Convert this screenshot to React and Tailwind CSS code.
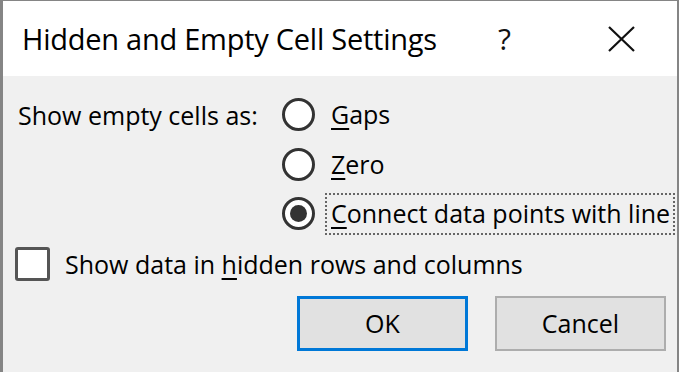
import { useState } from 'react';

const font = { fontFamily: '"Open Sans", "Noto Sans", Arial, sans-serif' };

function Radio({ checked, label, underline, rest, focused, onClick }) {
  return (
    <div className="flex items-center h-[33px]" onClick={onClick}>
      <div className="w-[33px] h-[33px] rounded-full border-[3px] border-[#333] bg-white flex items-center justify-center shrink-0">
        {checked && <div className="w-[17px] h-[17px] rounded-full bg-[#333]" />}
      </div>
      <div
        className={`ml-[10px] h-[42px] flex items-center pl-[4px] pr-[3px] border-2 ${
          focused ? 'border-dotted border-[#666]' : 'border-transparent'
        }`}
      >
        <span className="text-[25px] leading-none text-black">
          <span className="underline underline-offset-[4px] decoration-2">{underline}</span>
          {rest}
        </span>
      </div>
    </div>
  );
}

export default function App() {
  const [mode, setMode] = useState('connect');
  const [showHidden, setShowHidden] = useState(false);

  return (
    <div className="w-[681px] h-[372px] bg-white overflow-hidden" style={font}>
      <div className="w-[679px] h-[372px] flex flex-col border-l-[3px] border-t border-r-2 border-[#858585]">
        {/* title bar */}
        <div className="h-[75px] bg-white flex items-center shrink-0">
          <div className="pl-[19px] text-[29px] leading-none text-black tracking-[-0.25px]">
            Hidden and Empty Cell Settings
          </div>
          <div className="ml-auto w-[20px] text-[30px] leading-none text-[#111] font-medium">?</div>
          <svg className="ml-[90px] mr-[42px]" width="27" height="26" viewBox="0 0 27 26">
            <path d="M1 1 L26 25 M26 1 L1 25" stroke="#111" strokeWidth="2.2" fill="none" />
          </svg>
        </div>

        {/* body */}
        <div className="flex-1 bg-[#f0f0f0] pt-[22px]">
          <div className="flex">
            <div className="w-[279px] pl-[15px] pt-[1px] text-[25px] leading-[33px] text-black">
              Show empty cells as:
            </div>
            <div className="flex flex-col gap-[16.5px]">
              <Radio checked={mode === 'gaps'} underline="G" rest="aps" onClick={() => setMode('gaps')} />
              <Radio checked={mode === 'zero'} underline="Z" rest="ero" onClick={() => setMode('zero')} />
              <Radio
                checked={mode === 'connect'}
                focused
                underline="C"
                rest="onnect data points with line"
                onClick={() => setMode('connect')}
              />
            </div>
          </div>

          <div className="flex items-center mt-[17px] pl-[12px] h-[34px]" onClick={() => setShowHidden(!showHidden)}>
            <div className="w-[35px] h-[34px] border-[3px] border-[#555] rounded-[3px] bg-white shrink-0" />
            <span className="ml-[15px] text-[25px] leading-none text-black">
              Show data in <span className="underline underline-offset-[4px] decoration-2">h</span>idden rows and columns
            </span>
          </div>

          <div className="flex justify-end gap-[27px] mt-[15px] pr-[11px]">
            <button className="w-[171px] h-[55px] bg-[#e1e1e1] border-[3px] border-[#0078d7] text-[25px] leading-none text-black">
              OK
            </button>
            <button className="w-[171px] h-[55px] bg-[#e1e1e1] border-2 border-[#adadad] text-[25px] leading-none text-black">
              Cancel
            </button>
          </div>
        </div>
      </div>
    </div>
  );
}
